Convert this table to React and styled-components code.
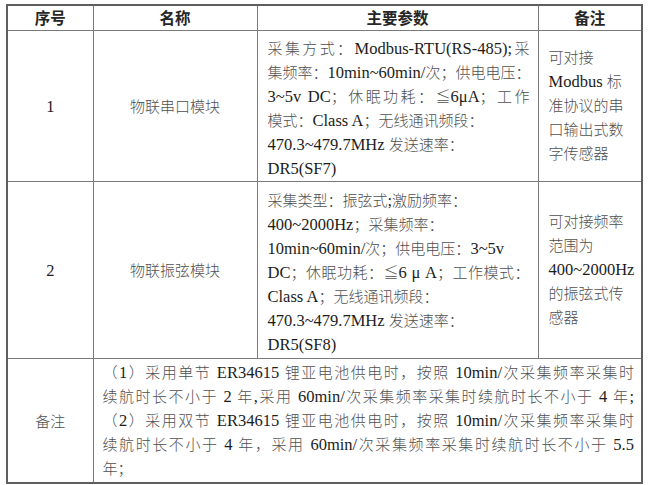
import React from "react";
import styled, { createGlobalStyle } from "styled-components";

const GlobalStyle = createGlobalStyle`
  html, body {
    margin: 0;
    padding: 0;
    background: #ffffff;
  }
  body {
    font-family: "Liberation Serif", "Noto Sans CJK SC", serif;
    color: #505050;
  }
`;

// 模块参数
const products = [
  {
    no: "1",
    name: "物联串口模块",
    height: 146,
    params: [
      { text: "采集方式：Modbus-RTU(RS-485);采", full: true },
      { text: "集频率：10min~60min/次；供电电压：", full: true },
      { text: "3~5v DC；休眠功耗：≦6μA；工作", full: true },
      { text: "模式：Class A；无线通讯频段：" },
      { text: "470.3~479.7MHz 发送速率：" },
      { text: "DR5(SF7)" },
    ],
    note: ["可对接", "Modbus 标", "准协议的串", "口输出式数", "字传感器"],
  },
  {
    no: "2",
    name: "物联振弦模块",
    height: 177,
    params: [
      { text: "采集类型：振弦式;激励频率：" },
      { text: "400~2000Hz；采集频率：" },
      { text: "10min~60min/次；供电电压：3~5v" },
      { text: "DC；休眠功耗：≦6 μ A；工作模式：", full: true },
      { text: "Class A；无线通讯频段：" },
      { text: "470.3~479.7MHz 发送速率：" },
      { text: "DR5(SF8)" },
    ],
    note: ["可对接频率", "范围为", "400~2000Hz", "的振弦式传", "感器"],
  },
];

const remarks = [
  { text: "（1）采用单节 ER34615 锂亚电池供电时，按照 10min/次采集频率采集时", full: true },
  { text: "续航时长不小于 2 年,采用 60min/次采集频率采集时续航时长不小于 4 年;", full: true },
  { text: "（2）采用双节 ER34615 锂亚电池供电时，按照 10min/次采集频率采集时", full: true },
  { text: "续航时长不小于 4 年，采用 60min/次采集频率采集时续航时长不小于 5.5", full: true },
  { text: "年；" },
];

// 西文部分用 Times 风格、略大略深
const runs = (text) =>
  text.split(/([\u0020-\u03ff]+)/).map((part, i) =>
    /[\u0021-\u03ff]/.test(part) ? <Latin key={i}>{part}</Latin> : part
  );

export default function App() {
  return (
    <Page>
      <GlobalStyle />
      <Table>
        <colgroup>
          <col style={{ width: 86 }} />
          <col style={{ width: 164 }} />
          <col style={{ width: 281 }} />
          <col style={{ width: 104 }} />
        </colgroup>
        <thead>
          <HeadRow>
            <HeadCell>序号</HeadCell>
            <HeadCell>名称</HeadCell>
            <HeadCell>主要参数</HeadCell>
            <HeadCell>备注</HeadCell>
          </HeadRow>
        </thead>
        <tbody>
          {products.map((p) => (
            <BodyRow key={p.no} $height={p.height}>
              <CenterCell>
                <Latin>{p.no}</Latin>
              </CenterCell>
              <CenterCell>{p.name}</CenterCell>
              <ParamCell>
                {p.params.map((line, i) => (
                  <Line key={i} $full={line.full}>
                    {runs(line.text)}
                  </Line>
                ))}
              </ParamCell>
              <NoteCell>
                {p.note.map((line, i) => (
                  <Line key={i}>{runs(line)}</Line>
                ))}
              </NoteCell>
            </BodyRow>
          ))}
          <BodyRow $height={125}>
            <CenterCell>备注</CenterCell>
            <RemarkCell colSpan={3}>
              {remarks.map((line, i) => (
                <Line key={i} $full={line.full}>
                  {runs(line.text)}
                </Line>
              ))}
            </RemarkCell>
          </BodyRow>
        </tbody>
      </Table>
    </Page>
  );
}

const Page = styled.div`
  width: 650px;
  height: 485px;
  padding: 4px 0 0 6px;
  box-sizing: border-box;
  background: #ffffff;
`;

const Table = styled.table`
  width: 635px;
  table-layout: fixed;
  border-collapse: collapse;
  border: 2px solid #5e5e5e;
  font-size: 15px;
  font-weight: 300;
  line-height: 24px;
`;

const HeadRow = styled.tr`
  height: 25px;
`;

const HeadCell = styled.th`
  border: 1px solid #7a7a7a;
  padding: 2px 0 0;
  font-size: 15.5px;
  font-weight: 700;
  color: #262626;
  text-align: center;
  vertical-align: middle;
  line-height: 20px;
`;

const BodyRow = styled.tr`
  height: ${({ $height }) => $height}px;
`;

const CenterCell = styled.td`
  border: 1px solid #7a7a7a;
  padding: 3px 0 0;
  text-align: center;
  vertical-align: middle;
`;

const ParamCell = styled.td`
  border: 1px solid #7a7a7a;
  padding: 6px 8px 0 10px;
  vertical-align: middle;
`;

const NoteCell = styled.td`
  border: 1px solid #7a7a7a;
  padding: 0 6px 0 10px;
  vertical-align: middle;
`;

const RemarkCell = styled.td`
  border: 1px solid #7a7a7a;
  padding: 2px 7px 0 9px;
  vertical-align: middle;
`;

const Line = styled.div`
  white-space: nowrap;
  text-align: ${({ $full }) => ($full ? "justify" : "left")};
  text-align-last: ${({ $full }) => ($full ? "justify" : "left")};
`;

const Latin = styled.span`
  font-size: 16.5px;
  font-weight: 400;
  color: #1c1c1c;
`;
